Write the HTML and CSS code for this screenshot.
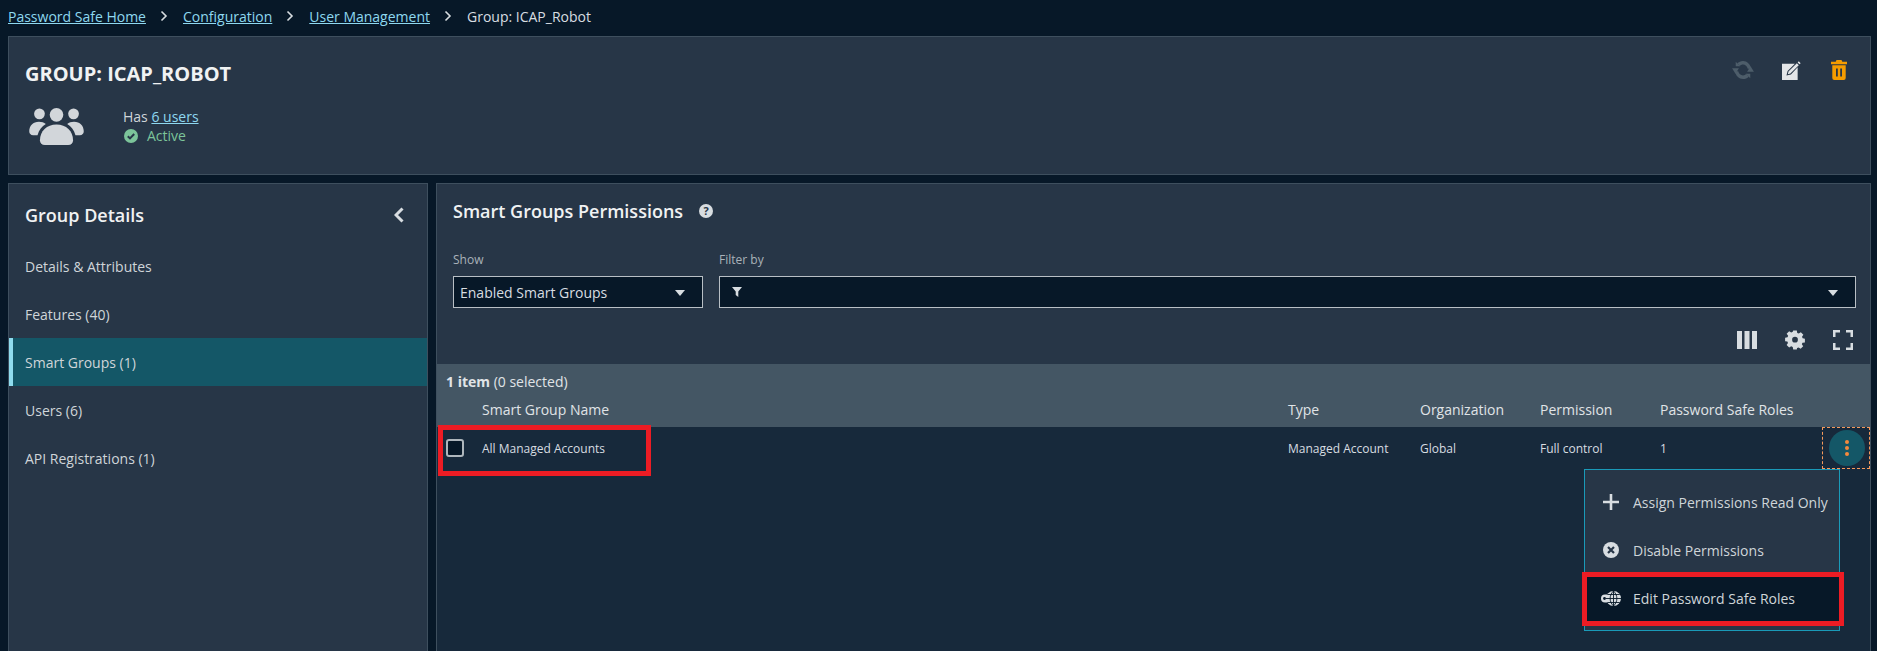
FILE: index.html
```html
<!DOCTYPE html>
<html lang="en">
<head>
<meta charset="utf-8">
<title>Group: ICAP_Robot</title>
<link rel="stylesheet" href="styles.css">
</head>
<body>
<div class="page">
  <nav class="crumbs">
    <a href="#">Password Safe Home</a>
    <svg class="crumb-sep" viewBox="0 0 8 12"><path d="M1.5 1.5 6 6l-4.500 4.500" /></svg>
    <a href="#">Configuration</a>
    <svg class="crumb-sep" viewBox="0 0 8 12"><path d="M1.5 1.5 6 6l-4.500 4.500" /></svg>
    <a href="#">User Management</a>
    <svg class="crumb-sep" viewBox="0 0 8 12"><path d="M1.5 1.5 6 6l-4.500 4.500" /></svg>
    <span>Group: ICAP_Robot</span>
  </nav>

  <header class="panel head">
    <div class="head-main">
      <h1 class="head-title">GROUP: ICAP_ROBOT</h1>
      <div class="head-info">
        <svg class="users-icon" viewBox="0 0 56 38">
          <circle cx="10.500" cy="6" r="5.500"/><circle cx="45.500" cy="6" r="5.500"/><circle cx="28" cy="7" r="7"/>
          <path d="M0 24c0-6 4-10 10-10 3 0 5 .8 7 2.500-4 2.500-7 6-8.500 11.500H4c-2.500 0-4-1.500-4-4Z"/>
          <path d="M56 24c0-6-4-10-10-10-3 0-5 .8-7 2.500 4 2.500 7 6 8.500 11.500H52c2.500 0 4-1.500 4-4Z"/>
          <path d="M11 33c0-9 7-16 17-16s17 7 17 16c0 3-2 5-5 5H16c-3 0-5-2-5-5Z"/>
        </svg>
        <div class="head-text">
          <div>Has <a href="#">6 users</a></div>
          <div class="status">
            <svg class="status-icon" viewBox="0 0 14 14"><circle cx="7" cy="7" r="7" fill="#7cc49a"/><path d="M3.800 7.200 6 9.400l4.200-4.400" fill="none" stroke="#273647" stroke-width="2"/></svg>
            <span>Active</span>
          </div>
        </div>
      </div>
    </div>
    <div class="head-actions">
      <svg class="act act-sync" viewBox="0 0 24 22" fill="#4d5d6a"><path d="M21 9.500C20 4.500 16.500 1 12 1 9.500 1 7.300 2 5.600 3.700L8.500 6.500C9.400 5.600 10.600 5 12 5c2.500 0 4.600 1.900 5.200 4.500Z"/><path d="M3 12.500C4 17.500 7.500 21 12 21c2.500 0 4.700-1 6.400-2.700l-2.900-2.800c-.9.900-2.100 1.500-3.500 1.500-2.500 0-4.600-1.900-5.200-4.500Z"/><path d="M0 9h7.500L3.700 15ZM24 13h-7.500L20.300 7Z"/><path d="M4 2v5h5ZM20 20v-5h-5Z"/></svg>
      <svg class="act act-edit" viewBox="0 0 17 17"><path fill="#e4e6e8" d="M0 2.500h11.500L5 9l-1 4 4-1 6-6.500V17H0Z"/><path fill="#e4e6e8" d="M5.800 9.500 13.300 2l1.700 1.700-7.500 7.500-2.300.6ZM14 1.300l1-1L16.700 2l-1 1Z"/></svg>
      <svg class="act act-trash" viewBox="0 0 16 20" fill="#f59c00"><path d="M5.500 0h5l.8 1.800H16V4.200H0V1.800h4.700ZM1.300 5.300h13.400V18a2 2 0 0 1-2 2H3.300a2 2 0 0 1-2-2Z"/><path fill="#273647" d="M5 8.500h1.800v8H5ZM9.200 8.500H11v8H9.200Z"/></svg>
    </div>
  </header>

  <div class="columns">
    <aside class="panel side">
      <div class="side-head">
        <h2 class="side-title">Group Details</h2>
        <svg class="collapse" viewBox="0 0 10 16"><path d="M8.500 1.500 2 8l6.500 6.500"/></svg>
      </div>
      <ul class="side-nav">
        <li class="side-item">Details &amp; Attributes</li>
        <li class="side-item">Features (40)</li>
        <li class="side-item active">Smart Groups (1)</li>
        <li class="side-item">Users (6)</li>
        <li class="side-item">API Registrations (1)</li>
      </ul>
    </aside>

    <section class="panel content">
      <div class="content-head">
        <h2 class="content-title">Smart Groups Permissions</h2>
        <span class="help">?</span>
      </div>
      <div class="filters">
        <div class="field field-show">
          <label class="field-label">Show</label>
          <div class="select"><span>Enabled Smart Groups</span><i class="caret"></i></div>
        </div>
        <div class="field field-filter">
          <label class="field-label">Filter by</label>
          <div class="select">
            <svg class="funnel" viewBox="0 0 10 10"><path d="M0 0h10L6.300 4.500V10L3.700 8V4.500Z"/></svg>
            <i class="caret"></i>
          </div>
        </div>
      </div>
      <div class="tools">
        <svg class="tool" viewBox="0 0 20 18"><path d="M0 0h5v18H0ZM7.500 0h5v18h-5ZM15 0h5v18h-5Z"/></svg>
        <svg class="tool" viewBox="0 0 20 20"><path fill-rule="evenodd" d="M8 0h4l.5 2.700 1.700.7L16.500 2l2.800 2.800-1.500 2.200.7 1.700 2.500.5v4l-2.700.3-.7 1.700 1.500 2.300-2.800 2.800-2.300-1.500-1.700.7L12 21H8l-.5-2.700-1.700-.7L3.500 19 .7 16.200 2.200 14l-.7-1.700L-1 12V8l2.700-.5.700-1.700L.7 3.500 3.500.7l2.300 1.500 1.700-.7ZM10 7a3.200 3.200 0 1 0 0 6.400A3.200 3.200 0 0 0 10 7Z" transform="translate(1 .5) scale(.9)"/></svg>
        <svg class="tool" viewBox="0 0 20 20"><path d="M0 0h7v2.500H2.500V7H0ZM13 0h7v7h-2.500V2.500H13ZM0 13h2.500v4.500H7V20H0ZM17.500 13H20v7h-7v-2.500h4.500Z"/></svg>
      </div>

      <div class="grid-head">
        <div class="grid-count"><b>1 item</b> (0 selected)</div>
        <div class="grid-row grid-labels">
          <span></span><span>Smart Group Name</span><span>Type</span><span>Organization</span><span>Permission</span><span>Password Safe Roles</span>
        </div>
      </div>
      <div class="grid-body">
        <div class="grid-row grid-data">
          <span class="check"></span><span>All Managed Accounts</span><span>Managed Account</span><span>Global</span><span>Full control</span><span>1</span>
        </div>
        <div class="mark mark-row"></div>
        <div class="kebab-box"><div class="kebab"><i></i><i></i><i></i></div></div>

        <div class="menu">
          <div class="menu-item">
            <svg class="menu-icon" viewBox="0 0 16 16"><path d="M6.700 0h2.600v6.700H16v2.600H9.300V16H6.700V9.300H0V6.700h6.700Z"/></svg>
            <span>Assign Permissions Read Only</span>
          </div>
          <div class="menu-item">
            <svg class="menu-icon" viewBox="0 0 16 16"><circle cx="8" cy="8" r="8"/><path d="m5 5 6 6m0-6-6 6" stroke="#273647" stroke-width="2.200"/></svg>
            <span>Disable Permissions</span>
          </div>
          <div class="menu-item selected">
            <svg class="menu-icon key" viewBox="0 0 20 15"><path d="M4 3.500h6v8H4a4 4 0 0 1 0-8Z"/><circle cx="3.500" cy="7.500" r="1.400" fill="#071828"/><circle cx="12.500" cy="7.500" r="7.500"/><path d="M12.500 0v15M5 7.500h15M6.300 3.500h12.400M6.300 11.500h12.400M12.500 0c-4.500 4.500-4.500 10.500 0 15 4.500-4.500 4.500-10.500 0-15Z" fill="none" stroke="#071828" stroke-width=".9"/></svg>
            <span>Edit Password Safe Roles</span>
          </div>
          <div class="mark mark-item"></div>
        </div>
      </div>
    </section>
  </div>
</div>
</body>
</html>
```
FILE: styles.css
```css
* { box-sizing: border-box; }
html, body { margin: 0; padding: 0; }
body {
  background: #071828;
  color: #d8dde1;
  font-family: "Open Sans", "Liberation Sans", sans-serif;
  font-size: 14px;
}
a { color: #8ed8f0; text-decoration: underline; }
h1, h2, ul { margin: 0; padding: 0; }
li { list-style: none; }

.page { height: 651px; overflow: hidden; padding: 0 6px 0 8px; }

.crumbs {
  height: 36px;
  display: flex;
  align-items: center;
  gap: 12px;
  padding-bottom: 4px;
  line-height: 19px;
}
.crumbs span { color: #d8dde1; }
.crumb-sep { width: 8px; height: 12px; fill: none; stroke: #d8dde1; stroke-width: 1.600; margin: 0 3px 0 2px; }

.panel { background: #273647; border: 1px solid #3e4f5e; }

.head {
  height: 139px;
  display: flex;
  justify-content: space-between;
  padding: 23px 16px 0 16px;
}
.head-title { font-size: 20px; font-weight: 700; line-height: 27px; color: #f0f2f3; }
.head-info { display: flex; align-items: flex-start; margin-top: 21px; margin-left: 4px; }
.users-icon { width: 55px; height: 37px; fill: #d2d6da; }
.head-text { margin: -1px 0 0 39px; line-height: 19px; color: #cfd5d9; }
.status { display: flex; align-items: center; color: #7cc49a; }
.status-icon { width: 14px; height: 14px; margin: 0 9px 0 1px; }

.head-actions { display: flex; align-items: center; height: 22px; margin-top: -1px; margin-right: 7px; }
.act { flex: none; }
.act-sync { width: 22px; height: 20px; margin-right: 28px; }
.act-edit { width: 19px; height: 19px; margin-right: 30px; }
.act-trash { width: 16px; height: 20px; }

.columns { display: flex; gap: 8px; margin-top: 8px; }

.side { width: 420px; height: 480px; flex: none; }
.side-head {
  height: 48px;
  display: flex;
  justify-content: space-between;
  align-items: center;
  padding: 15px 23px 1px 16px;
  margin-bottom: 10px;
}
.side-title { font-size: 18px; font-weight: 600; color: #f0f2f3; }
.collapse { width: 10px; height: 16px; fill: none; stroke: #d8dde1; stroke-width: 3; }
.side-item { height: 48px; line-height: 49px; padding-left: 16px; color: #cfd5d9; }
.side-item.active { background: #145767; border-left: 4px solid #8fdcee; padding-left: 12px; }

.content { flex: 1; height: 480px; display: flex; flex-direction: column; }
.content-head { display: flex; align-items: center; height: 55px; padding: 0 0 1px 16px; }
.content-title { font-size: 18px; font-weight: 600; color: #f0f2f3; }
.help {
  width: 14px; height: 14px; margin-left: 16px;
  border-radius: 50%;
  background: #d8dde1; color: #273647;
  font-size: 11px; font-weight: 700; line-height: 14px; text-align: center;
}

.filters { display: flex; gap: 16px; padding: 13px 14px 0 16px; }
.field-show { width: 250px; flex: none; }
.field-filter { flex: 1; }
.field-label { display: block; font-size: 12px; line-height: 16px; height: 24px; color: #a9b2b9; }
.select {
  height: 32px;
  background: #071828;
  border: 1px solid #b8bfc5;
  display: flex;
  align-items: center;
  justify-content: space-between;
  padding: 0 17px 0 6px;
  color: #d8dde1;
}
.caret { width: 0; height: 0; border: 5px solid transparent; border-top: 6px solid #d8dde1; border-bottom: 0; margin-top: 1px; }
.funnel { width: 10px; height: 10px; fill: #d8dde1; margin-left: 6px; }

.tools { height: 56px; display: flex; justify-content: flex-end; align-items: flex-start; gap: 28px; padding: 22px 17px 0 0; }
.tool { width: 20px; height: 20px; fill: #d8dde1; }

.grid-head { background: #445664; height: 63px; flex: none; }
.grid-count { height: 35px; padding: 8px 0 0 9px; line-height: 19px; font-size: 14px; color: #e0e4e7; }
.grid-count b { font-weight: 700; }

.grid-row {
  display: grid;
  grid-template-columns: 45px 806px 132px 120px 120px 1fr;
}
.grid-labels { line-height: 19px; color: #e0e4e7; margin-top: 1px; }

.grid-body { flex: 1; background: #17293b; position: relative; }
.grid-data { height: 42px; align-items: center; font-size: 12px; color: #d8dde1; }
.check {
  width: 18px; height: 18px; margin-left: 9px;
  border: 2px solid #aeb6bc; border-radius: 3px; background: #071828;
}

.mark { position: absolute; border: 5px solid #ed1c24; pointer-events: none; }
.mark-row { left: 1px; top: -2px; width: 213px; height: 51px; }

.kebab-box {
  position: absolute; right: 0; top: 0;
  width: 48px; height: 42px;
  padding-left: 2px;
  border: 1px dashed #f79a5c;
  display: flex; align-items: center; justify-content: center;
}
.kebab {
  width: 36px; height: 36px; border-radius: 50%;
  background: #145767;
  display: flex; flex-direction: column; align-items: center; justify-content: center; gap: 2px;
}
.kebab i { width: 4px; height: 4px; border-radius: 50%; background: #f58a3c; }

.menu {
  position: absolute; right: 30px; top: 42px;
  width: 256px; height: 162px;
  background: #273647;
  border: 1px solid #1a9ab8;
  padding-top: 8px;
}
.menu-item {
  height: 48px;
  display: flex; align-items: center;
  padding-left: 18px;
  color: #cfd5d9;
}
.menu-icon { width: 16px; height: 16px; fill: #d8dde1; margin-right: 14px; flex: none; }
.menu-icon.key { width: 20px; height: 15px; margin-left: -2px; margin-right: 12px; }
.menu-item.selected { background: #071828; }
.mark-item { left: -3px; top: 102px; width: 262px; height: 54px; }
```
